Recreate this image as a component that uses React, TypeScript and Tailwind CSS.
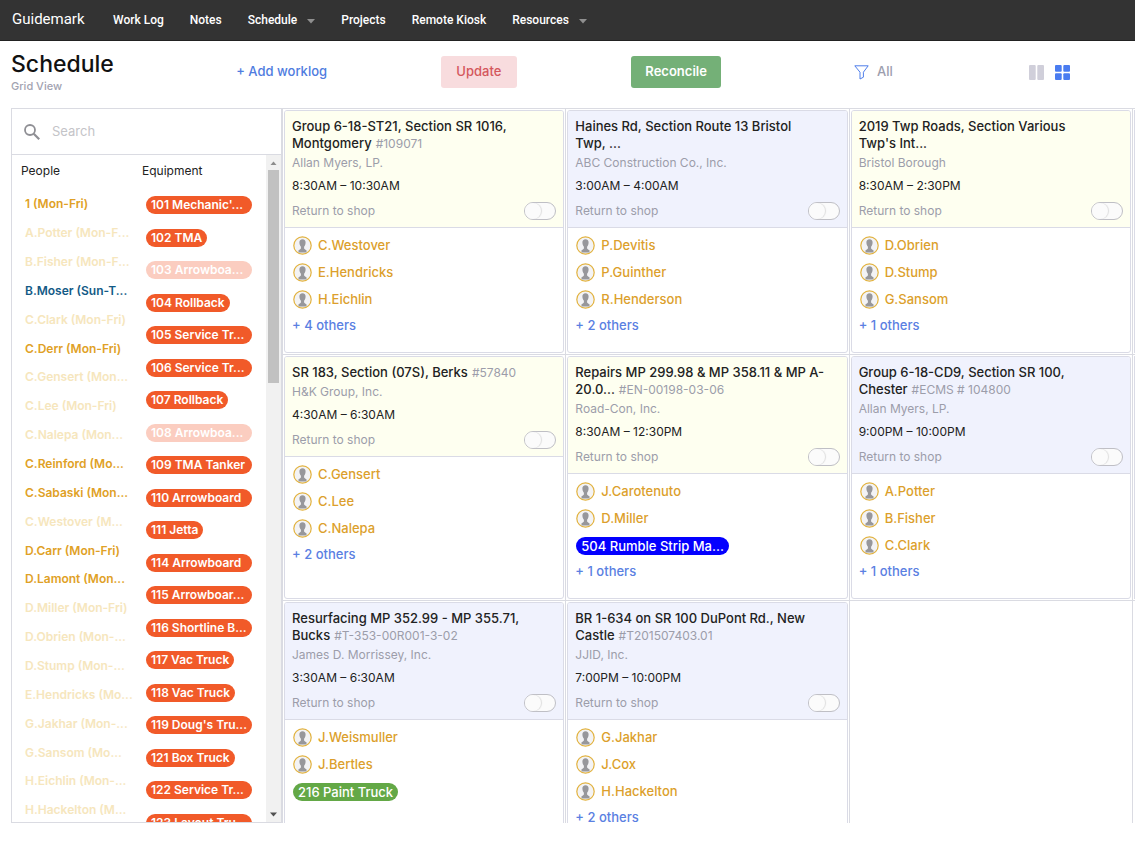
import React from 'react';

const AVAILABLE = 'text-[#dfa126]';
const BOOKED = 'text-[#f6e6bd]';
const NIGHT = 'text-[#135a86]';

const people = [
  { name: '1 (Mon-Fri)', tone: AVAILABLE },
  { name: 'A.Potter (Mon-F...', tone: BOOKED },
  { name: 'B.Fisher (Mon-F...', tone: BOOKED },
  { name: 'B.Moser (Sun-T...', tone: NIGHT },
  { name: 'C.Clark (Mon-Fri)', tone: BOOKED },
  { name: 'C.Derr (Mon-Fri)', tone: AVAILABLE },
  { name: 'C.Gensert (Mon...', tone: BOOKED },
  { name: 'C.Lee (Mon-Fri)', tone: BOOKED },
  { name: 'C.Nalepa (Mon...', tone: BOOKED },
  { name: 'C.Reinford (Mo...', tone: AVAILABLE },
  { name: 'C.Sabaski (Mon...', tone: AVAILABLE },
  { name: 'C.Westover (M...', tone: BOOKED },
  { name: 'D.Carr (Mon-Fri)', tone: AVAILABLE },
  { name: 'D.Lamont (Mon...', tone: AVAILABLE },
  { name: 'D.Miller (Mon-Fri)', tone: BOOKED },
  { name: 'D.Obrien (Mon-...', tone: BOOKED },
  { name: 'D.Stump (Mon-...', tone: BOOKED },
  { name: 'E.Hendricks (Mo...', tone: BOOKED },
  { name: 'G.Jakhar (Mon-...', tone: BOOKED },
  { name: 'G.Sansom (Mo...', tone: BOOKED },
  { name: 'H.Eichlin (Mon-...', tone: BOOKED },
  { name: 'H.Hackelton (M...', tone: BOOKED },
];

const equipment = [
  { name: "101 Mechanic'...", full: true },
  { name: '102 TMA' },
  { name: '103 Arrowboa...', full: true, booked: true },
  { name: '104 Rollback' },
  { name: '105 Service Tr...', full: true },
  { name: '106 Service Tr...', full: true },
  { name: '107 Rollback' },
  { name: '108 Arrowboa...', full: true, booked: true },
  { name: '109 TMA Tanker', full: true },
  { name: '110 Arrowboard', full: true },
  { name: '111 Jetta' },
  { name: '114 Arrowboard', full: true },
  { name: '115 Arrowboar...', full: true },
  { name: '116 Shortline B...', full: true },
  { name: '117 Vac Truck' },
  { name: '118 Vac Truck' },
  { name: "119 Doug's Tru...", full: true },
  { name: '121 Box Truck' },
  { name: '122 Service Tr...', full: true },
  { name: '123 Layout Tru...', full: true },
];

type Job = {
  title: string[];
  code?: string;
  company: string;
  time: string;
  night?: boolean;
  crew: string[];
  truck?: { name: string; color: string };
  others?: number;
};

const jobs: Job[] = [
  {
    title: ['Group 6-18-ST21, Section SR 1016,', 'Montgomery'],
    code: '#109071',
    company: 'Allan Myers, LP.',
    time: '8:30AM – 10:30AM',
    crew: ['C.Westover', 'E.Hendricks', 'H.Eichlin'],
    others: 4,
  },
  {
    title: ['Haines Rd, Section Route 13 Bristol', 'Twp, ...'],
    company: 'ABC Construction Co., Inc.',
    time: '3:00AM – 4:00AM',
    night: true,
    crew: ['P.Devitis', 'P.Guinther', 'R.Henderson'],
    others: 2,
  },
  {
    title: ['2019 Twp Roads, Section Various', "Twp's Int..."],
    company: 'Bristol Borough',
    time: '8:30AM – 2:30PM',
    crew: ['D.Obrien', 'D.Stump', 'G.Sansom'],
    others: 1,
  },
  {
    title: ['SR 183, Section (07S), Berks'],
    code: '#57840',
    company: 'H&K Group, Inc.',
    time: '4:30AM – 6:30AM',
    crew: ['C.Gensert', 'C.Lee', 'C.Nalepa'],
    others: 2,
  },
  {
    title: ['Repairs MP 299.98 & MP 358.11 & MP A-', '20.0...'],
    code: '#EN-00198-03-06',
    company: 'Road-Con, Inc.',
    time: '8:30AM – 12:30PM',
    crew: ['J.Carotenuto', 'D.Miller'],
    truck: { name: '504 Rumble Strip Ma...', color: 'bg-[#0400ff]' },
    others: 1,
  },
  {
    title: ['Group 6-18-CD9, Section SR 100,', 'Chester'],
    code: '#ECMS # 104800',
    company: 'Allan Myers, LP.',
    time: '9:00PM – 10:00PM',
    night: true,
    crew: ['A.Potter', 'B.Fisher', 'C.Clark'],
    others: 1,
  },
  {
    title: ['Resurfacing MP 352.99 - MP 355.71,', 'Bucks'],
    code: '#T-353-00R001-3-02',
    company: 'James D. Morrissey, Inc.',
    time: '3:30AM – 6:30AM',
    night: true,
    crew: ['J.Weismuller', 'J.Bertles'],
    truck: { name: '216 Paint Truck', color: 'bg-[#63a846]' },
  },
  {
    title: ['BR 1-634 on SR 100 DuPont Rd., New', 'Castle'],
    code: '#T201507403.01',
    company: 'JJID, Inc.',
    time: '7:00PM – 10:00PM',
    night: true,
    crew: ['G.Jakhar', 'J.Cox', 'H.Hackelton'],
    others: 2,
  },
];

function Caret() {
  return (
    <svg width="8" height="5" viewBox="0 0 8 5" className="ml-[10px] mt-0.5 inline-block" aria-hidden="true">
      <path d="M0 0h8L4 4.5z" fill="#8f8f8f" />
    </svg>
  );
}

function Navbar() {
  return (
    <nav className="flex h-[41px] shrink-0 items-center gap-[26px] border-b border-[#222] bg-[#333] pl-3 font-[Roboto,sans-serif] text-xs font-medium text-white">
      <a href="#" className="w-[75px] text-[15px] font-normal">
        Guidemark
      </a>
      <a href="#">Work Log</a>
      <a href="#">Notes</a>
      <a href="#" className="flex items-center">
        Schedule
        <Caret />
      </a>
      <a href="#">Projects</a>
      <a href="#">Remote Kiosk</a>
      <a href="#" className="flex items-center">
        Resources
        <Caret />
      </a>
    </nav>
  );
}

function Toolbar() {
  return (
    <header className="flex h-[67px] shrink-0 items-start pr-[65px] pl-[11px] text-[13px] font-medium">
      <div className="w-[172px] pt-[9px]">
        <h1 className="text-[23px] leading-7 text-[#111]">Schedule</h1>
        <p className="text-[11px] leading-4 text-[#a2a3b1]">Grid View</p>
      </div>
      <div className="flex h-8 flex-1 items-center self-start pt-[31px] pb-[31px]">
        <div className="flex flex-1 justify-center">
          <button type="button" className="text-[#4f7ce0]">
            + Add worklog
          </button>
        </div>
        <div className="flex flex-1 justify-center">
          <button type="button" className="h-8 w-[76px] rounded-[3px] bg-[#f8dcde] text-[#d4575c]">
            Update
          </button>
        </div>
        <div className="flex flex-1 justify-center">
          <button type="button" className="h-8 w-[90px] rounded-[3px] bg-[#74b077] font-semibold text-white">
            Reconcile
          </button>
        </div>
        <div className="flex flex-1 justify-center">
          <button type="button" className="flex items-center gap-2 text-[#9d9eae]">
            <svg width="15" height="15" viewBox="0 0 15 15" fill="none" stroke="#4f7eea" aria-hidden="true">
              <path d="M.8.8h13.4L9.4 7.2v5L6 14V7.2z" strokeLinejoin="round" />
            </svg>
            All
          </button>
        </div>
        <div className="flex w-[98px] justify-end gap-[11px]">
          <button type="button" aria-label="Column view">
            <svg width="15" height="15" viewBox="0 0 15 15" fill="#d0cfda" aria-hidden="true">
              <rect width="6.7" height="15" rx="1" />
              <rect x="8.3" width="6.7" height="15" rx="1" />
            </svg>
          </button>
          <button type="button" aria-label="Grid view">
            <svg width="15" height="15" viewBox="0 0 15 15" fill="#4a7cf0" aria-hidden="true">
              <rect width="6.7" height="6.7" rx="1" />
              <rect x="8.3" width="6.7" height="6.7" rx="1" />
              <rect y="8.3" width="6.7" height="6.7" rx="1" />
              <rect x="8.3" y="8.3" width="6.7" height="6.7" rx="1" />
            </svg>
          </button>
        </div>
      </div>
    </header>
  );
}

function Scrollbar() {
  return (
    <div className="flex w-[15px] flex-col items-center bg-[#f1f1f1]" aria-hidden="true">
      <svg width="15" height="15" viewBox="0 0 15 15" className="shrink-0">
        <path d="M4.5 10h6l-3-3.500z" fill="#8c8c8c" />
      </svg>
      <div className="h-[213px] w-[11px] bg-[#c1c1c1]" />
      <svg width="15" height="15" viewBox="0 0 15 15" className="mt-auto shrink-0">
        <path d="M4 5.500h7l-3.500 4z" fill="#505050" />
      </svg>
    </div>
  );
}

function Sidebar() {
  return (
    <aside className="flex w-[271px] shrink-0 flex-col border border-[#dadbe2] text-xs">
      <label className="flex h-[46px] shrink-0 items-center gap-3 border-b border-[#dadbe2] pl-3 text-[13px]">
        <svg
          width="16"
          height="16"
          viewBox="0 0 16 16"
          fill="none"
          stroke="#8f8f94"
          strokeWidth="1.8"
          className="shrink-0"
          aria-hidden="true"
        >
          <circle cx="6" cy="6" r="5" />
          <path d="M9.700 9.700l5.500 5.500" strokeWidth="2.200" />
        </svg>
        <input
          type="text"
          placeholder="Search"
          aria-label="Search"
          className="w-full outline-none placeholder:text-[#c4c4c8]"
        />
      </label>
      <div className="flex min-h-0 flex-1">
        <div className="flex min-w-0 flex-1 overflow-hidden">
          <section className="w-[130px] shrink-0 pl-[9px]">
            <h2 className="pt-1.5 pb-2 leading-5 text-[#222]">People</h2>
            <ul className="pl-1 font-semibold">
              {people.map((p) => (
                <li key={p.name} className={`flex h-[29px] items-center whitespace-nowrap nth-[7n]:h-7 ${p.tone}`}>
                  {p.name}
                </li>
              ))}
            </ul>
          </section>
          <section className="min-w-0 flex-1">
            <h2 className="pt-1.5 pb-2 leading-5 text-[#222]">Equipment</h2>
            <ul className="pl-1 font-semibold">
              {equipment.map((e) => (
                <li key={e.name} className="flex items-center odd:h-8 even:h-[33px]">
                  <span
                    className={`h-[18px] rounded-full px-[5px] leading-[18px] whitespace-nowrap text-white ${
                      e.full ? 'w-[106px]' : ''
                    } ${e.booked ? 'bg-[#fbcdc0]' : 'bg-[#f15a29]'}`}
                  >
                    {e.name}
                  </span>
                </li>
              ))}
            </ul>
          </section>
        </div>
        <Scrollbar />
      </div>
    </aside>
  );
}

function Avatar() {
  return (
    <svg width="19" height="19" viewBox="0 0 19 19" className="shrink-0" aria-hidden="true">
      <circle cx="9.500" cy="9.500" r="8.700" fill="#f3f3f5" stroke="#e2b23e" strokeWidth="1.200" />
      <path
        d="M9.500 3.200c-2.100 0-3.200 1.400-3.100 3.500.1 2 .8 3.200 1.500 4.100v1.700c-.5.900-1.600 1.300-2.400 1.700v2.300h8v-2.300c-.8-.4-1.900-.8-2.400-1.700v-1.700c.7-.9 1.400-2.100 1.500-4.100.1-2.100-1-3.500-3.100-3.500z"
        fill="#97979b"
      />
    </svg>
  );
}

function JobCard({ job }: { job: Job }) {
  const lastLine = job.title.length - 1;

  return (
    <article className="flex h-full flex-col overflow-hidden rounded-[3px] border border-[#dadbe6] bg-white">
      <div className={`border-b border-[#dadbe6] px-[7px] pt-[7px] pb-1.5 ${job.night ? 'bg-[#f0f2fd]' : 'bg-[#fefff0]'}`}>
        <h3 className="text-[13px] leading-[17px] font-medium text-[#222]">
          {job.title.map((line, i) => (
            <span key={line} className="flex items-baseline gap-1 whitespace-nowrap">
              <span>{line}</span>
              {i === lastLine && job.code && <span className="text-xs leading-4 font-normal text-[#9c9daa]">{job.code}</span>}
            </span>
          ))}
        </h3>
        <p className="mt-px text-xs leading-5 text-[#9c9daa]">{job.company}</p>
        <p className="mt-[3px] text-xs leading-5 text-[#222]">{job.time}</p>
        <label className="mt-[5px] flex h-5 items-center justify-between text-xs text-[#9c9daa]">
          Return to shop
          <input
            type="checkbox"
            className="h-[18px] w-8 appearance-none rounded-full border border-[#bfbfc5] bg-[#fbfbfb] before:block before:size-4 before:rounded-full before:bg-[#fbfbfb] before:shadow-[1px_0_1px_#ddd]"
          />
        </label>
      </div>
      <ul className="px-2 pt-1 text-[13px] font-medium">
        {job.crew.map((name) => (
          <li key={name} className="flex h-[27px] items-center gap-1.5 text-[#dc9f2c]">
            <Avatar />
            {name}
          </li>
        ))}
        {job.truck && (
          <li className="flex h-[27px] items-center">
            <span className={`h-[18px] rounded-full px-[5px] leading-[18px] whitespace-nowrap text-white ${job.truck.color}`}>
              {job.truck.name}
            </span>
          </li>
        )}
      </ul>
      {job.others && (
        <a href="#" className="px-[7px] text-[13px] leading-6 font-medium text-[#5a80e2]">
          + {job.others} others
        </a>
      )}
    </article>
  );
}

export default function App() {
  return (
    <div className="flex h-screen flex-col bg-white pb-5 font-[Inter,sans-serif]">
      <Navbar />
      <Toolbar />
      <main className="flex min-h-0 flex-1 pl-[11px]">
        <Sidebar />
        <div className="flex min-w-0 flex-1 items-start overflow-hidden border-t border-l border-[#dadbe2]">
          <div className="grid flex-1 grid-cols-3">
            {jobs.map((job) => (
              <div key={job.title[0]} className="h-[246px] border-r border-b border-[#dadbe2] p-px">
                <JobCard job={job} />
              </div>
            ))}
            <div className="h-[246px] border-r border-b border-[#dadbe2]" />
          </div>
          {/* Edge of the next column, scrolled out of view */}
          <div className="w-0.5 shrink-0">
            <div className="h-[246px] border-b border-[#dadbe2] py-px pl-px">
              <div className="h-full bg-[#dadbe6]" />
            </div>
            <div className="h-[246px] border-b border-[#dadbe2] py-px pl-px">
              <div className="h-full bg-[#dadbe6]" />
            </div>
          </div>
        </div>
      </main>
    </div>
  );
}
